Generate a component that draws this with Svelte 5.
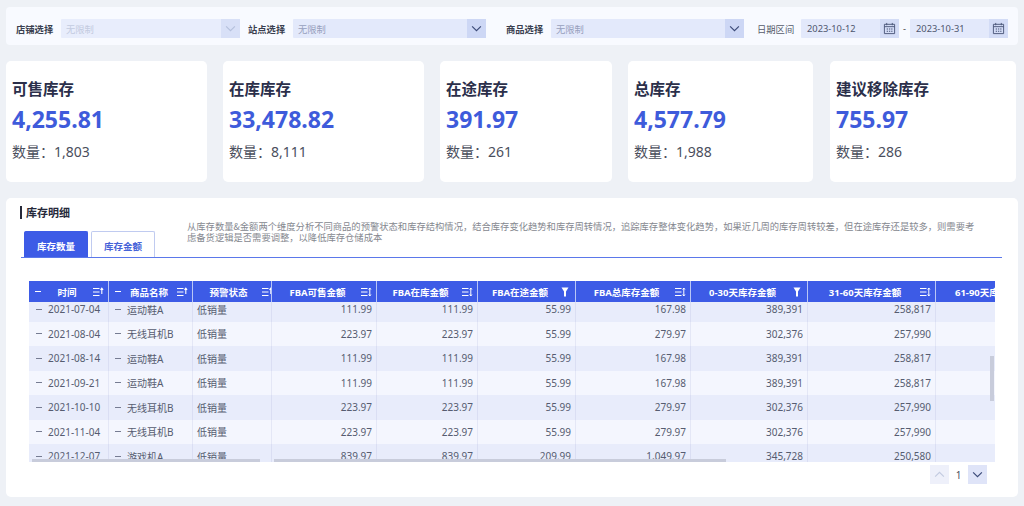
<script>
  const cards = [
    { t: '可售库存', v: '4,255.81', n: '1,803' },
    { t: '在库库存', v: '33,478.82', n: '8,111' },
    { t: '在途库存', v: '391.97', n: '261' },
    { t: '总库存', v: '4,577.79', n: '1,988' },
    { t: '建议移除库存', v: '755.97', n: '286' }
  ];
  const cols = [
    { t: '时间', dash: true, icon: 'up' },
    { t: '商品名称', dash: true, icon: 'up' },
    { t: '预警状态', icon: 'up' },
    { t: 'FBA可售金额', icon: 'both' },
    { t: 'FBA在库金额', icon: 'both' },
    { t: 'FBA在途金额', icon: 'filter' },
    { t: 'FBA总库存金额', icon: 'both' },
    { t: '0-30天库存金额', icon: 'filter' },
    { t: '31-60天库存金额', icon: 'both' },
    { t: '61-90天库存金额', icon: '' }
  ];
  const A = ['运动鞋A', '111.99', '111.99', '55.99', '167.98', '389,391', '258,817'];
  const B = ['无线耳机B', '223.97', '223.97', '55.99', '279.97', '302,376', '257,990'];
  const C = ['游戏机A', '839.97', '839.97', '209.99', '1,049.97', '345,728', '250,580'];
  const rows = [
    ['2021-07-04', A], ['2021-08-04', B], ['2021-08-14', A], ['2021-09-21', A],
    ['2021-10-10', B], ['2021-11-04', B], ['2021-12-07', C]
  ];
</script>

{#snippet chevron(up)}
  <svg class="chev" viewBox="0 0 12 8" width="11" height="7" aria-hidden="true">
    <path d={up ? 'M1 6.5 6 1.5l5 5' : 'M1 1.5l5 5 5-5'} fill="none" stroke="currentColor" stroke-width="1.3" />
  </svg>
{/snippet}

{#snippet calendar()}
  <svg viewBox="0 0 14 14" width="13" height="13" aria-hidden="true">
    <path d="M1.5 2.5h11v10h-11z M1.5 5h11 M4 1v2.5 M10 1v2.5" fill="none" stroke="#4a5578" stroke-width="1" />
    <path d="M4 7h1.4v1.2H4z M6.4 7h1.4v1.2H6.4z M8.8 7h1.4v1.2H8.8z M4 9.4h1.4v1.2H4z M6.4 9.4h1.4v1.2H6.4z M8.8 9.4h1.4v1.2H8.8z" fill="#4a5578" />
  </svg>
{/snippet}

{#snippet headIcon(kind)}
  {#if kind === 'filter'}
    <svg class="hicon" viewBox="0 0 12 10" width="12" height="10" aria-hidden="true">
      <path d="M2.5.5h7L7 4.5V9.5H5V4.5z" fill="#fff" />
    </svg>
  {:else if kind === 'up'}
    <svg class="hicon" viewBox="0 0 12 10" width="12" height="10" aria-hidden="true">
      <path d="M1 1.5h6.5M1 5h6.5M1 8.5h6.5" stroke="#fff" stroke-width="1" fill="none" />
      <path d="M9.8 7V1.4M8.5 2.8 9.8 1.2l1.3 1.6" stroke="#fff" stroke-width="1.1" fill="none" />
    </svg>
  {:else if kind === 'both'}
    <svg class="hicon" viewBox="0 0 12 10" width="12" height="10" aria-hidden="true">
      <path d="M1 1.5h6.5M1 5h6.5M1 8.5h6.5" stroke="#fff" stroke-width="1" fill="none" />
      <path d="M9.8 1.2v7.6M8.7 2.5 9.8 1l1.1 1.5M8.7 7.5 9.8 9l1.1-1.5" stroke="#fff" stroke-width="1" fill="none" />
    </svg>
  {/if}
{/snippet}

<div class="page">
  <section class="filters">
    <span class="label">店铺选择</span>
    <div class="select w179 disabled"><span class="ph">无限制</span><span class="caret">{@render chevron(false)}</span></div>
    <span class="label ml8">站点选择</span>
    <div class="select w193"><span class="ph">无限制</span><span class="caret">{@render chevron(false)}</span></div>
    <span class="label ml20">商品选择</span>
    <div class="select w193"><span class="ph">无限制</span><span class="caret">{@render chevron(false)}</span></div>
    <span class="label plain ml13">日期区间</span>
    <div class="select date"><span class="val">2023-10-12</span><span class="caret">{@render calendar()}</span></div>
    <span class="dash">-</span>
    <div class="select date"><span class="val">2023-10-31</span><span class="caret">{@render calendar()}</span></div>
  </section>

  <section class="cards">
    {#each cards as c}
      <article class="card">
        <h3>{c.t}</h3>
        <div class="value">{c.v}</div>
        <div class="count"><span class="cjk">数量&#xFF1A;</span>{c.n}</div>
      </article>
    {/each}
  </section>

  <section class="panel">
    <div class="head">
      <div class="head-left">
        <h2>库存明细</h2>
        <div class="tabs">
          <div class="tab active">库存数量</div>
          <div class="tab">库存金额</div>
        </div>
      </div>
      <p class="desc">从库存数量&amp;金额两个维度分析不同商品的预警状态和库存结构情况&#xFF0C;结合库存变化趋势和库存周转情况&#xFF0C;追踪库存整体变化趋势&#xFF0C;如果近几周的库存周转较差&#xFF0C;但在途库存还是较多&#xFF0C;则需要考<br />虑备货逻辑是否需要调整&#xFF0C;以降低库存仓储成本</p>
    </div>

    <div class="table">
      <div class="grid thead">
        {#each cols as c}
          <div class="th">
            {#if c.dash}<span class="hdash"></span>{/if}
            <span class="th-text">{c.t}</span>
            {@render headIcon(c.icon)}
          </div>
        {/each}
      </div>
      <div class="tbody">
        <div class="tbody-inner">
          {#each rows as r, i}
            <div class="grid row" class:odd={i % 2 === 0}>
              <div class="td tree"><span class="bdash"></span>{r[0]}</div>
              <div class="td tree"><span class="bdash"></span>{r[1][0]}</div>
              <div class="td">低销量</div>
              {#each r[1].slice(1) as v}
                <div class="td num">{v}</div>
              {/each}
              <div class="td"></div>
            </div>
          {/each}
        </div>
      </div>
      <div class="hbar left"></div>
      <div class="hbar right"></div>
      <div class="vbar"></div>
    </div>

    <div class="pager">
      <span class="pbtn off">{@render chevron(true)}</span>
      <span class="pnum">1</span>
      <span class="pbtn">{@render chevron(false)}</span>
    </div>
  </section>
</div>

<style>
  :global(body) {
    margin: 0;
    background: #eef1f6;
    font-family: "Noto Sans", "Noto Sans CJK SC", sans-serif;
  }
  .page {
    width: 1012px;
    height: 499px;
    padding: 7px 0 0 6px;
    display: flex;
    flex-direction: column;
    overflow: hidden;
  }
  .filters {
    height: 38px;
    box-sizing: border-box;
    flex: none;
    background: #f8faff;
    border-radius: 4px;
    display: flex;
    align-items: center;
    padding: 5px 0 0 10px;
    font-size: 9.3px;
  }
  .label {
    width: 45px;
    flex: none;
    font-weight: 700;
    color: #3a3f50;
    white-space: nowrap;
  }
  .label.plain {
    width: 44px;
    font-weight: 400;
    color: #555a6b;
  }
  .ml8 { margin-left: 8px; }
  .ml20 { margin-left: 20px; }
  .ml13 { margin-left: 13px; }
  .select {
    height: 19px;
    background: #e3e9fb;
    border-radius: 1px;
    display: flex;
    align-items: center;
    justify-content: space-between;
    padding-left: 5px;
    flex: none;
    box-sizing: border-box;
  }
  .w179 { width: 179px; }
  .w193 { width: 193px; }
  .date { width: 98px; }
  .ph { color: #97a0bd; }
  .val { color: #4e566e; margin-left: 1px; }
  .caret {
    width: 19px;
    height: 19px;
    background: #cdd7f5;
    display: flex;
    align-items: center;
    justify-content: center;
    color: #3b4a78;
  }
  .date .caret { background: #d3dcf6; }
  .disabled { background: #e8edfc; }
  .disabled .ph { color: #c3cbe0; }
  .disabled .caret { background: #d8e0f7; color: #b5c0dc; }
  .chev { display: block; }
  .dash {
    width: 11px;
    flex: none;
    text-align: center;
    color: #444;
  }
  .cards {
    margin-top: 16px;
    display: grid;
    grid-template-columns: 201px 201px 172px 185px 187px;
    gap: 16px;
    height: 121px;
    flex: none;
  }
  .card {
    background: #fff;
    border-radius: 5px;
    padding: 17px 6px 0;
  }
  .card:last-child { margin-left: 1px; }
  .card h3 {
    margin: 0;
    font-size: 15.5px;
    line-height: 22px;
    font-weight: 700;
    color: #2b2f4a;
    white-space: nowrap;
  }
  .value {
    margin-top: 3px;
    font-size: 23px;
    line-height: 32px;
    font-weight: 700;
    color: #3e5bdb;
  }
  .count {
    margin-top: 6px;
    font-size: 14px;
    line-height: 20px;
    color: #4a4e5c;
  }
  .cjk { font-family: "Noto Sans CJK SC", sans-serif; }
  .panel {
    margin-top: 16px;
    height: 299px;
    width: 1012px;
    box-sizing: border-box;
    flex: none;
    background: #fff;
    border-radius: 5px;
    padding: 8px 16px 0 15px;
  }
  .head {
    display: flex;
    border-bottom: 1px solid #5b78ea;
  }
  .head-left {
    width: 166px;
    flex: none;
  }
  h2 {
    margin: 0 0 0 -1px;
    height: 13px;
    line-height: 13px;
    font-size: 11px;
    font-weight: 700;
    color: #26293a;
    border-left: 2px solid #26293a;
    padding-left: 4px;
  }
  .tabs {
    margin: 12px 0 0 3px;
    display: flex;
    gap: 3px;
  }
  .tab {
    width: 64px;
    height: 26px;
    box-sizing: border-box;
    display: flex;
    align-items: center;
    justify-content: center;
    font-size: 9.5px;
    font-weight: 700;
    color: #4763d8;
    border: 1px solid #c0cbf0;
    border-bottom: none;
    border-radius: 2px 2px 0 0;
    padding-top: 2px;
  }
  .tab.active {
    background: #3d5be6;
    border-color: #3d5be6;
    color: #fff;
  }
  .desc {
    align-self: flex-end;
    margin: 0 0 14px;
    font-family: "Noto Sans CJK SC", sans-serif;
    font-size: 9.3px;
    line-height: 11px;
    color: #85888f;
    white-space: nowrap;
  }
  .table {
    position: relative;
    margin: 23px 0 0 8px;
    width: 966px;
    height: 181px;
    overflow: hidden;
  }
  .grid {
    display: grid;
    grid-template-columns: 79px 84px 79px 105px 101px 98px 115px 117px 128px 60px;
  }
  .thead {
    height: 21px;
    background: #3d5be6;
  }
  .th {
    display: flex;
    align-items: center;
    box-sizing: border-box;
    color: #fff;
    font-size: 9.5px;
    font-weight: 700;
    padding: 0 4px 0 6px;
    border-left: 1px solid #b9c6f6;
    white-space: nowrap;
    overflow: hidden;
    min-width: 0;
  }
  .th:first-child { border-left: none; }
  .th:last-child { padding-left: 19px; }
  .th:nth-child(3) { padding-right: 0; }
  .th:nth-child(3) .hicon { margin-right: -2px; }
  .th-text {
    flex: 1;
    text-align: center;
  }
  .th:last-child .th-text { text-align: left; }
  .hdash {
    width: 6px;
    height: 1px;
    background: #fff;
    flex: none;
    margin-right: 4px;
  }
  .hicon { flex: none; margin-left: 3px; }
  .tbody {
    height: 160px;
    overflow: hidden;
  }
  .tbody-inner { margin-top: -5px; }
  .row {
    height: 24.5px;
    background: #f4f6fe;
  }
  .row.odd { background: #e8ecfb; }
  .td {
    display: flex;
    align-items: center;
    box-sizing: border-box;
    padding: 0 5px 0 4px;
    font-size: 10px;
    color: #565c70;
    border-left: 1px solid rgba(120, 135, 190, 0.13);
    white-space: nowrap;
  }
  .td:first-child { border-left: none; }
  .td.num { justify-content: flex-end; padding-right: 4px; }
  .td.tree { padding-left: 6px; }
  .td.tree:first-child { padding-left: 7px; }
  .bdash {
    width: 6px;
    height: 1px;
    background: #767c92;
    margin-right: 6px;
    flex: none;
  }
  .hbar {
    position: absolute;
    bottom: 0;
    height: 3px;
    background: #c8ccdb;
  }
  .hbar.left { left: 3px; width: 228px; }
  .hbar.right { left: 245px; width: 452px; }
  .vbar {
    position: absolute;
    left: 961px;
    top: 75px;
    width: 4px;
    height: 45px;
    background: #c8ccdb;
  }
  .pager {
    margin: 3px 15px 0 0;
    display: flex;
    align-items: center;
    justify-content: flex-end;
  }
  .pbtn {
    width: 19px;
    height: 19px;
    background: #dfe4f8;
    display: flex;
    align-items: center;
    justify-content: center;
    color: #3b4a78;
  }
  .pbtn.off { background: #eef0fa; color: #c3cbe0; }
  .pnum {
    width: 19px;
    text-align: center;
    font-size: 10px;
    color: #4a4e5c;
  }
</style>
